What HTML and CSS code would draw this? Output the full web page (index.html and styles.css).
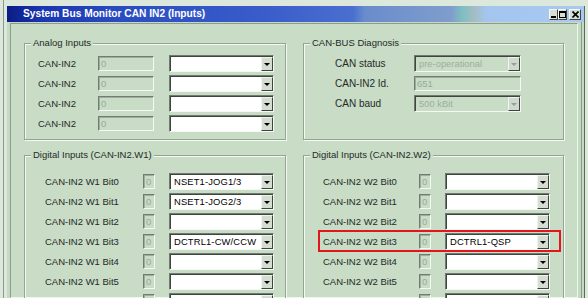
FILE: index.html
```html
<!DOCTYPE html>
<html>
<head>
<meta charset="utf-8">
<link rel="stylesheet" href="styles.css">
</head>
<body>
<div class="desk">
  <div class="win">
    <div class="title">
      <span class="title-text">System Bus Monitor CAN IN2 (Inputs)</span>
      <div class="caps">
        <span class="cap cap-min"><i></i></span>
        <span class="cap cap-max"><i></i></span>
        <span class="cap cap-close"><svg width="7" height="7" viewBox="0 0 7 7"><path d="M0.5 0.5 L6.5 6.5 M6.5 0.5 L0.5 6.5" stroke="#000" stroke-width="1.6"/></svg></span>
      </div>
    </div>
    <div class="frame">
      <div class="client">
        <div class="grid">
          <div class="group g-analog">
            <span class="legend">Analog Inputs</span>
            <div class="rows">
              <div class="row"><span class="lbl">CAN-IN2</span><span class="field f-wide">0</span><span class="combo"><span class="val"></span><span class="btn"><i></i></span></span></div>
              <div class="row"><span class="lbl">CAN-IN2</span><span class="field f-wide">0</span><span class="combo"><span class="val"></span><span class="btn"><i></i></span></span></div>
              <div class="row"><span class="lbl">CAN-IN2</span><span class="field f-wide">0</span><span class="combo"><span class="val"></span><span class="btn"><i></i></span></span></div>
              <div class="row"><span class="lbl">CAN-IN2</span><span class="field f-wide">0</span><span class="combo"><span class="val"></span><span class="btn"><i></i></span></span></div>
            </div>
          </div>
          <div class="group g-diag">
            <span class="legend">CAN-BUS Diagnosis</span>
            <div class="rows">
              <div class="row"><span class="lbl">CAN status</span><span class="combo disabled"><span class="val">pre-operational</span><span class="btn"><i></i></span></span></div>
              <div class="row"><span class="lbl">CAN-IN2 Id.</span><span class="field f-id">651</span></div>
              <div class="row"><span class="lbl">CAN baud</span><span class="combo disabled"><span class="val">500 kBit</span><span class="btn"><i></i></span></span></div>
            </div>
          </div>
          <div class="group g-dig g-w1">
            <span class="legend">Digital Inputs (CAN-IN2.W1)</span>
            <div class="rows">
              <div class="row"><span class="lbl">CAN-IN2 W1 Bit0</span><span class="field f-bit">0</span><span class="combo"><span class="val">NSET1-JOG1/3</span><span class="btn"><i></i></span></span></div>
              <div class="row"><span class="lbl">CAN-IN2 W1 Bit1</span><span class="field f-bit">0</span><span class="combo"><span class="val">NSET1-JOG2/3</span><span class="btn"><i></i></span></span></div>
              <div class="row"><span class="lbl">CAN-IN2 W1 Bit2</span><span class="field f-bit">0</span><span class="combo"><span class="val"></span><span class="btn"><i></i></span></span></div>
              <div class="row"><span class="lbl">CAN-IN2 W1 Bit3</span><span class="field f-bit">0</span><span class="combo"><span class="val">DCTRL1-CW/CCW</span><span class="btn"><i></i></span></span></div>
              <div class="row"><span class="lbl">CAN-IN2 W1 Bit4</span><span class="field f-bit">0</span><span class="combo"><span class="val"></span><span class="btn"><i></i></span></span></div>
              <div class="row"><span class="lbl">CAN-IN2 W1 Bit5</span><span class="field f-bit">0</span><span class="combo"><span class="val"></span><span class="btn"><i></i></span></span></div>
              <div class="row"><span class="lbl"></span><span class="field f-bit"></span><span class="combo"><span class="val"></span><span class="btn"><i></i></span></span></div>
            </div>
          </div>
          <div class="group g-dig g-w2">
            <span class="legend">Digital Inputs (CAN-IN2.W2)</span>
            <div class="rows">
              <div class="row"><span class="lbl">CAN-IN2 W2 Bit0</span><span class="field f-bit">0</span><span class="combo"><span class="val"></span><span class="btn"><i></i></span></span></div>
              <div class="row"><span class="lbl">CAN-IN2 W2 Bit1</span><span class="field f-bit">0</span><span class="combo"><span class="val"></span><span class="btn"><i></i></span></span></div>
              <div class="row"><span class="lbl">CAN-IN2 W2 Bit2</span><span class="field f-bit">0</span><span class="combo"><span class="val"></span><span class="btn"><i></i></span></span></div>
              <div class="row hl"><span class="lbl">CAN-IN2 W2 Bit3</span><span class="field f-bit">0</span><span class="combo"><span class="val">DCTRL1-QSP</span><span class="btn"><i></i></span></span></div>
              <div class="row"><span class="lbl">CAN-IN2 W2 Bit4</span><span class="field f-bit">0</span><span class="combo"><span class="val"></span><span class="btn"><i></i></span></span></div>
              <div class="row"><span class="lbl">CAN-IN2 W2 Bit5</span><span class="field f-bit">0</span><span class="combo"><span class="val"></span><span class="btn"><i></i></span></span></div>
              <div class="row"><span class="lbl"></span><span class="field f-bit"></span><span class="combo"><span class="val"></span><span class="btn"><i></i></span></span></div>
            </div>
          </div>
        </div>
      </div>
    </div>
  </div>
</div>
</body>
</html>
```

FILE: styles.css
```css
* { box-sizing: border-box; }
html, body { margin: 0; padding: 0; }
body {
  width: 588px;
  height: 298px;
  overflow: hidden;
  background: #dce8db;
  font-family: "Liberation Sans", Arial, sans-serif;
}
.desk {
  margin-left: 3px;
  border-left: 1px solid #8e988d;
  padding: 6px 0 0 3px;
  height: 298px;
}
.win {
  width: 578px;
  height: 292px;
  border-right: 1px solid #5c665b;
  background: #c5dac3;
}
.title {
  height: 16px;
  display: flex;
  align-items: center;
  padding-left: 16px;
  background: linear-gradient(90deg, #0b1c86 0%, #1a36b0 6%, #2a4cc2 20%, #3a5dca 45%, #4a6fd0 60%, #6a8ccc 62%, #7f9dcc 77%, #7fbfc0 79%, #a5bcc4 81%, #a4c6ee 83%, #a8caf2 100%);
}
.title-text {
  color: #fff;
  font-weight: bold;
  font-size: 10.2px;
  line-height: 12px;
  flex: 1;
}
.caps {
  display: flex;
  align-items: center;
  margin-right: 3px;
}
.cap {
  width: 9px;
  height: 11px;
  background: #d6ddd4;
  border: 1px solid;
  border-color: #f6faf6 #3c423c #3c423c #f6faf6;
  display: flex;
  align-items: center;
  justify-content: center;
}
.cap-close { width: 12px; margin-left: 2px; }
.cap-min i {
  display: block;
  width: 5px;
  height: 2px;
  background: #000;
  margin-top: 5px;
  margin-right: 1px;
}
.cap-max i {
  display: block;
  width: 7px;
  height: 7px;
  border: 1px solid #000;
  border-top-width: 2px;
}
.frame {
  width: 575px;
  padding: 1px 3px 0 3px;
  border-right: 1px solid #8b998a;
  height: 276px;
}
.client {
  height: 275px;
  border: 1px solid;
  border-color: #8d9c8c #eef6ee #eef6ee #8d9c8c;
  background: #c8dcc6;
  padding: 19px 0 0 13px;
}
.grid {
  display: grid;
  grid-template-columns: 262px 261px;
  grid-template-rows: 97px auto;
  column-gap: 17px;
  row-gap: 15px;
}
.group {
  border: 1px solid #93a592;
  box-shadow: inset 1px 1px 0 #f3f9f2, 1px 1px 0 #f3f9f2;
  color: #2b2f2b;
  font-size: 9.5px;
}
.g-dig { height: 200px; }
.legend {
  display: block;
  width: fit-content;
  margin: -7px 0 0 6px;
  padding: 0 2px;
  line-height: 12px;
  background: #c8dcc6;
  color: #262a26;
  white-space: nowrap;
}
.rows { margin-top: 4px; }
.g-dig .rows { margin-top: 10px; }
.row {
  height: 20px;
  display: flex;
  align-items: center;
  position: relative;
}
.lbl {
  white-space: nowrap;
  font-size: 9.5px;
  color: #262a26;
}
.g-analog .rows { padding-left: 13px; }
.g-analog .lbl { width: 60px; }
.g-diag .rows { padding-left: 31px; }
.g-diag .lbl { width: 79px; font-size: 10px; }
.g-w1 .rows { padding-left: 20px; }
.g-w1 .lbl { width: 98px; }
.g-w2 .rows { padding-left: 19px; }
.g-w2 .lbl { width: 96px; }

.field {
  height: 15px;
  border: 1px solid;
  border-color: #717d70 #f4faf3 #f4faf3 #717d70;
  box-shadow: inset 1px 1px 0 #9eae9d;
  background: #c8dcc6;
  color: #9aaa99;
  font-size: 9.5px;
  line-height: 13px;
  padding-left: 2px;
  overflow: hidden;
}
.f-wide { width: 56px; margin-right: 15px; }
.f-bit { width: 12px; margin-right: 14px; }
.f-id { width: 107px; }

.combo {
  width: 105px;
  height: 17px;
  display: flex;
  border: 1px solid;
  border-color: #6f7b6e #f4faf3 #f4faf3 #6f7b6e;
  box-shadow: inset 1px 1px 0 #3f463f;
  background: #fff;
  padding: 1px 0 0 1px;
}
.combo .val {
  flex: 1;
  font-size: 9.4px;
  letter-spacing: 0.15px;
  line-height: 14px;
  padding-left: 3px;
  color: #000;
  white-space: nowrap;
  overflow: hidden;
}
.combo .btn {
  width: 12px;
  height: 14px;
  background: #d5ddd3;
  border: 1px solid;
  border-color: #eef4ee #3e443e #3e443e #eef4ee;
  display: flex;
  align-items: center;
  justify-content: center;
}
.combo .btn i {
  display: block;
  width: 0;
  height: 0;
  border-left: 3px solid transparent;
  border-right: 3px solid transparent;
  border-top: 3px solid #000;
  margin-top: 1px;
}
.combo.disabled { background: #c8dcc6; width: 107px; }
.combo.disabled .val { color: #9fae9e; letter-spacing: 0; }
.combo.disabled .btn { background: #cfd9cd; }
.combo.disabled .btn i { border-top-color: #93a092; }

.hl::after {
  content: "";
  position: absolute;
  left: -5px;
  right: 2px;
  top: -1px;
  bottom: -1px;
  border: 2px solid #e3161d;
}
```
